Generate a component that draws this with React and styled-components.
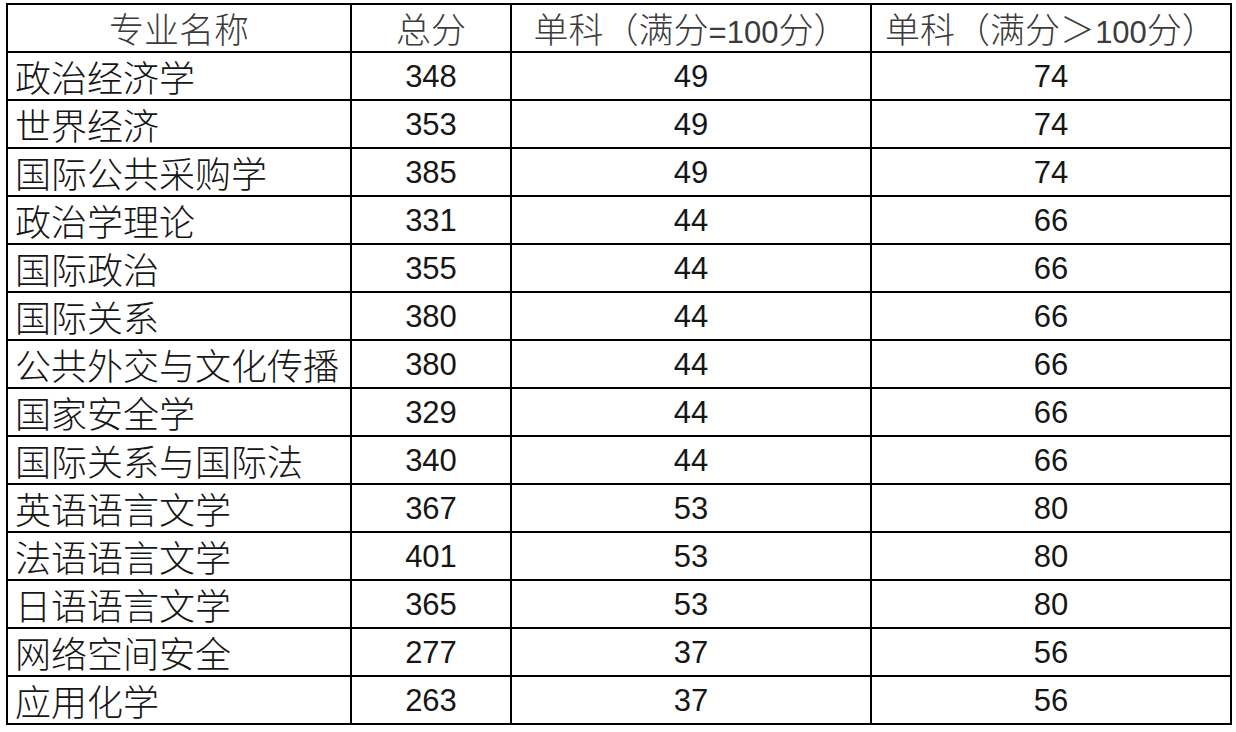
import React from 'react';
import styled, { createGlobalStyle } from 'styled-components';

const GlobalStyle = createGlobalStyle`
    html, body {
        margin: 0;
        padding: 0;
        background: #fff;
    }
    body {
        width: 1236px;
        height: 732px;
        overflow: hidden;
    }
`

const rows = [
    ['政治经济学', 348, 49, 74],
    ['世界经济', 353, 49, 74],
    ['国际公共采购学', 385, 49, 74],
    ['政治学理论', 331, 44, 66],
    ['国际政治', 355, 44, 66],
    ['国际关系', 380, 44, 66],
    ['公共外交与文化传播', 380, 44, 66],
    ['国家安全学', 329, 44, 66],
    ['国际关系与国际法', 340, 44, 66],
    ['英语语言文学', 367, 53, 80],
    ['法语语言文学', 401, 53, 80],
    ['日语语言文学', 365, 53, 80],
    ['网络空间安全', 277, 37, 56],
    ['应用化学', 263, 37, 56],
];

const Sheet = styled.div`
    padding: 3px 0 0 6px;
`

const Table = styled.table`
    border-collapse: collapse;
    table-layout: fixed;
    width: 1226px;
    font-family: "Liberation Sans", "Noto Sans CJK SC", sans-serif;
    color: #161616;
`

const Row = styled.tr`
    height: 48px;
`

const Cell = styled.td`
    border: 2px solid #000;
    padding: 2px ${(p) => (p.left ? '7px' : '0')} 0;
    text-align: ${(p) => (p.left ? 'left' : 'center')};
    vertical-align: middle;
    white-space: nowrap;
    line-height: 1.15;
    font-size: ${(p) => (p.left ? '36px' : '31px')};
    font-family: ${(p) => (p.left ? '"Noto Sans CJK SC", sans-serif' : '"Liberation Sans", "Noto Sans CJK SC", sans-serif')};
    font-weight: 300;
`

const Head = styled(Cell)`
    color: #3c3c3c;
`

const Cjk = styled.span`
    font-family: "Noto Sans CJK SC", sans-serif;
    font-size: 35px;
`

const Num = styled.span`
    font-family: "Liberation Sans", sans-serif;
    font-size: 31px;
`

const App = () => {
    return (
        <Sheet>
            <GlobalStyle />
            <Table>
                <colgroup>
                    <col style={{ width: 344 }} />
                    <col style={{ width: 160 }} />
                    <col style={{ width: 360 }} />
                    <col style={{ width: 360 }} />
                </colgroup>
                <thead>
                    <Row>
                        <Head as="th"><Cjk>专业名称</Cjk></Head>
                        <Head as="th"><Cjk>总分</Cjk></Head>
                        <Head as="th"><Cjk>单科（满分</Cjk><Num>=100</Num><Cjk>分）</Cjk></Head>
                        <Head as="th"><Cjk>单科（满分＞</Cjk><Num>100</Num><Cjk>分）</Cjk></Head>
                    </Row>
                </thead>
                <tbody>
                    {rows.map((r) => (
                        <Row key={r[0]}>
                            <Cell left>{r[0]}</Cell>
                            <Cell>{r[1]}</Cell>
                            <Cell>{r[2]}</Cell>
                            <Cell>{r[3]}</Cell>
                        </Row>
                    ))}
                </tbody>
            </Table>
        </Sheet>
    )
}

export default App
